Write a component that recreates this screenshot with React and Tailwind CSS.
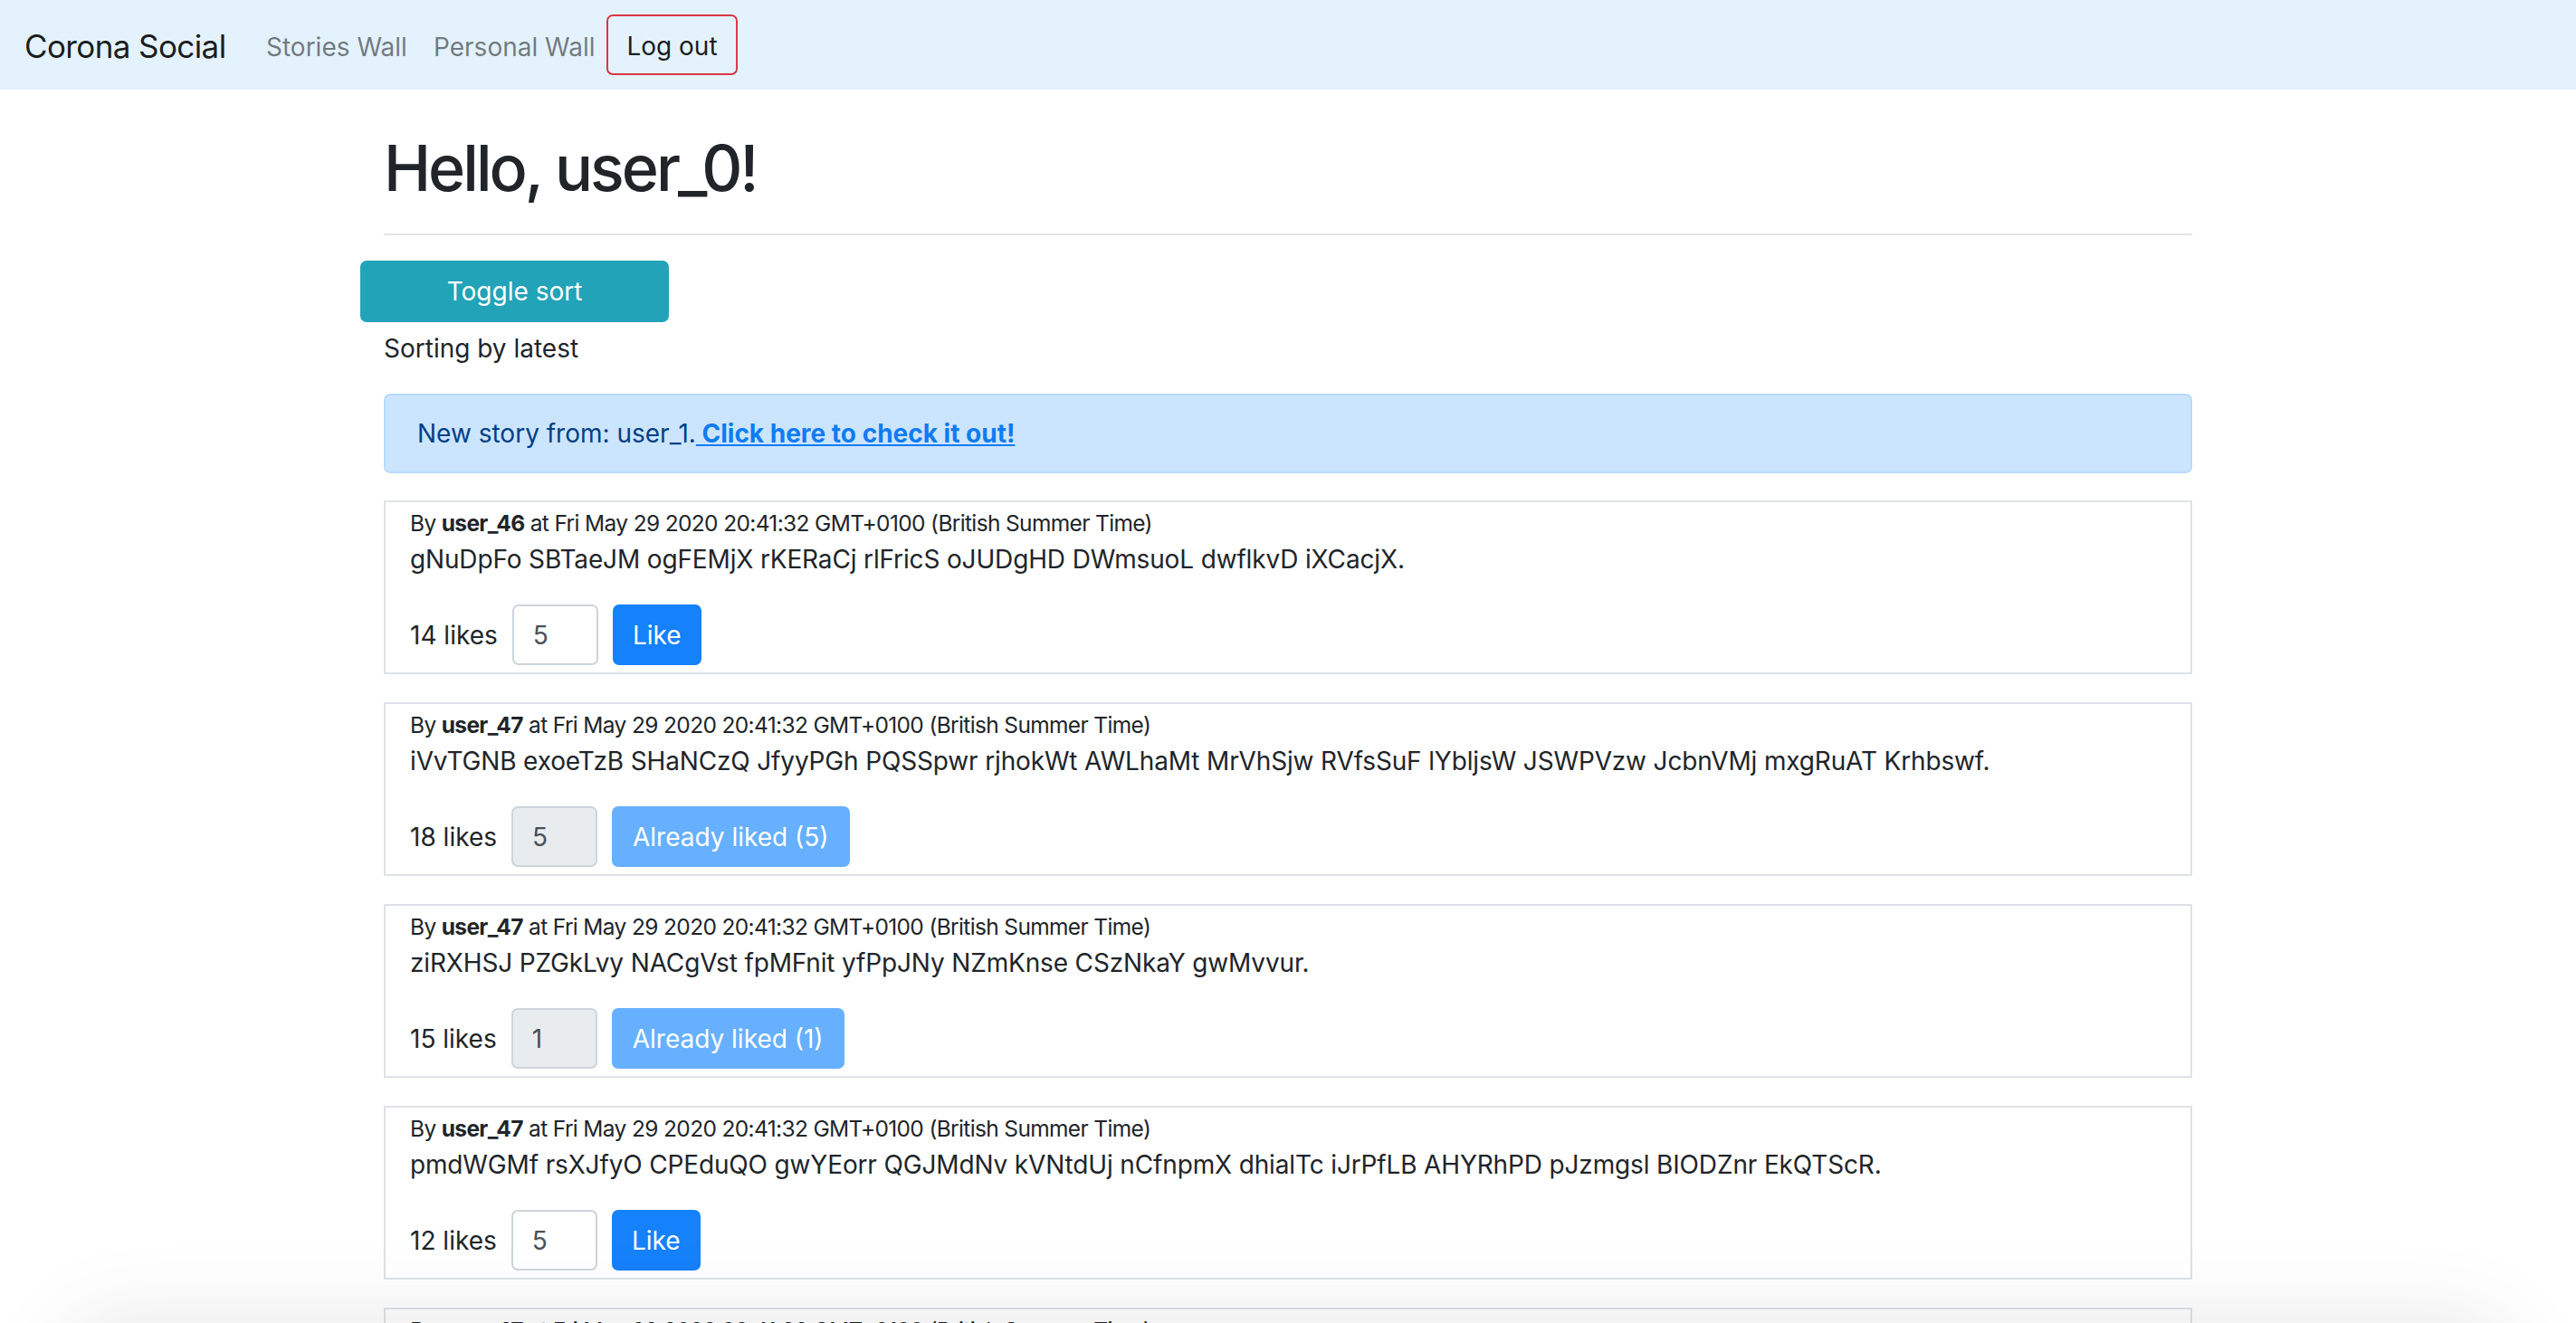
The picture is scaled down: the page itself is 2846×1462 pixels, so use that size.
import React from "react";

const stories = [
  {
    user: "user_46",
    text: "gNuDpFo SBTaeJM ogFEMjX rKERaCj rlFricS oJUDgHD DWmsuoL dwflkvD iXCacjX.",
    likes: 14,
    value: "5",
    liked: null,
  },
  {
    user: "user_47",
    text: "iVvTGNB exoeTzB SHaNCzQ JfyyPGh PQSSpwr rjhokWt AWLhaMt MrVhSjw RVfsSuF lYbljsW JSWPVzw JcbnVMj mxgRuAT Krhbswf.",
    likes: 18,
    value: "5",
    liked: 5,
  },
  {
    user: "user_47",
    text: "ziRXHSJ PZGkLvy NACgVst fpMFnit yfPpJNy NZmKnse CSzNkaY gwMvvur.",
    likes: 15,
    value: "1",
    liked: 1,
  },
  {
    user: "user_47",
    text: "pmdWGMf rsXJfyO CPEduQO gwYEorr QGJMdNv kVNtdUj nCfnpmX dhialTc iJrPfLB AHYRhPD pJzmgsl BIODZnr EkQTScR.",
    likes: 12,
    value: "5",
    liked: null,
  },
  {
    user: "user_47",
    text: "hQkWcPz LmnTyrE bVxoqNa.",
    likes: 9,
    value: "5",
    liked: null,
  },
];

function Story({ s }) {
  return (
    <div className="border-2 border-[#dee2e6] bg-white px-[27px] pt-[5px] pb-[8px] mb-[31px]">
      <div className="text-[24.5px] leading-[37px] tracking-[-0.65px] text-[#212529]">
        By <span className="font-bold">{s.user}</span> at Fri May 29 2020 20:41:32 GMT+0100 (British Summer Time)
      </div>
      <div className="text-[28px] leading-[42px] tracking-[-0.15px] text-[#212529]">{s.text}</div>
      <div className="mt-[29px] flex items-center h-[67px]">
        <span className="text-[28px] text-[#212529] mr-[16px]">{s.likes} likes</span>
        <div
          className={
            s.liked
              ? "w-[95px] h-[67px] border-2 border-[#ced4da] rounded-[7px] bg-[#e9ecef] flex items-center pl-[21px] text-[28px] text-[#495057]"
              : "w-[95px] h-[67px] border-2 border-[#ced4da] rounded-[7px] bg-white flex items-center pl-[21px] text-[28px] text-[#495057]"
          }
        >
          {s.value}
        </div>
        {s.liked ? (
          <div className="ml-[16px] h-[67px] px-[23px] rounded-[7px] bg-[#66b0ff] text-white text-[28px] flex items-center">
            Already liked ({s.liked})
          </div>
        ) : (
          <div className="ml-[16px] h-[67px] w-[98px] rounded-[7px] bg-[#1581fb] text-white text-[28px] flex items-center justify-center">
            Like
          </div>
        )}
      </div>
    </div>
  );
}

export default function App() {
  return (
    <div
      className="relative h-[1462px] overflow-hidden bg-white"
      style={{ fontFamily: "Inter, 'Noto Sans', sans-serif" }}
    >
      <nav className="h-[99px] bg-[#e3f2fd] flex items-center pl-[27px]">
        <span className="w-[267px] pt-[4px] text-[35px] tracking-[-0.6px] text-black/90">Corona Social</span>
        <span className="w-[185px] pt-[4px] text-[28px] text-black/50">Stories Wall</span>
        <span className="w-[191px] pt-[4px] text-[28px] text-black/50">Personal Wall</span>
        <span className="w-[145px] h-[67px] pt-[3px] border-2 border-[#dc3545] rounded-[7px] flex items-center justify-center text-[28px] text-black/90">
          Log out
        </span>
      </nav>

      <main className="w-[1998px] mx-auto">
        <h1 className="mt-[45px] text-[70px] leading-[84px] font-medium tracking-[-3px] text-[#212529]">Hello, user_0!</h1>
        <div className="mt-[30px] h-[2px] bg-black/10"></div>
        <div className="mt-[28px] -ml-[26px] w-[341px] h-[68px] rounded-[7px] bg-[#22a3b8] text-white text-[28px] flex items-center justify-center">
          Toggle sort
        </div>
        <div className="mt-[8px] text-[28px] leading-[42px] text-[#212529]">Sorting by latest</div>

        <div className="mt-[29px] mb-[30px] border-2 border-[#b8daff] bg-[#cce5ff] rounded-[7px] px-[35px] py-[21px] text-[28px] leading-[42px] text-[#004085]">
          New story from: user_1.
          <a className="font-bold text-[#0f7bf2] underline"> Click here to check it out!</a>
        </div>

        {stories.map((s, i) => (
          <Story key={i} s={s} />
        ))}
      </main>

      <div className="pointer-events-none absolute left-[60px] right-[60px] top-[1450px] h-[200px] rounded-[80px] bg-black/[0.08] blur-[40px]"></div>
    </div>
  );
}
